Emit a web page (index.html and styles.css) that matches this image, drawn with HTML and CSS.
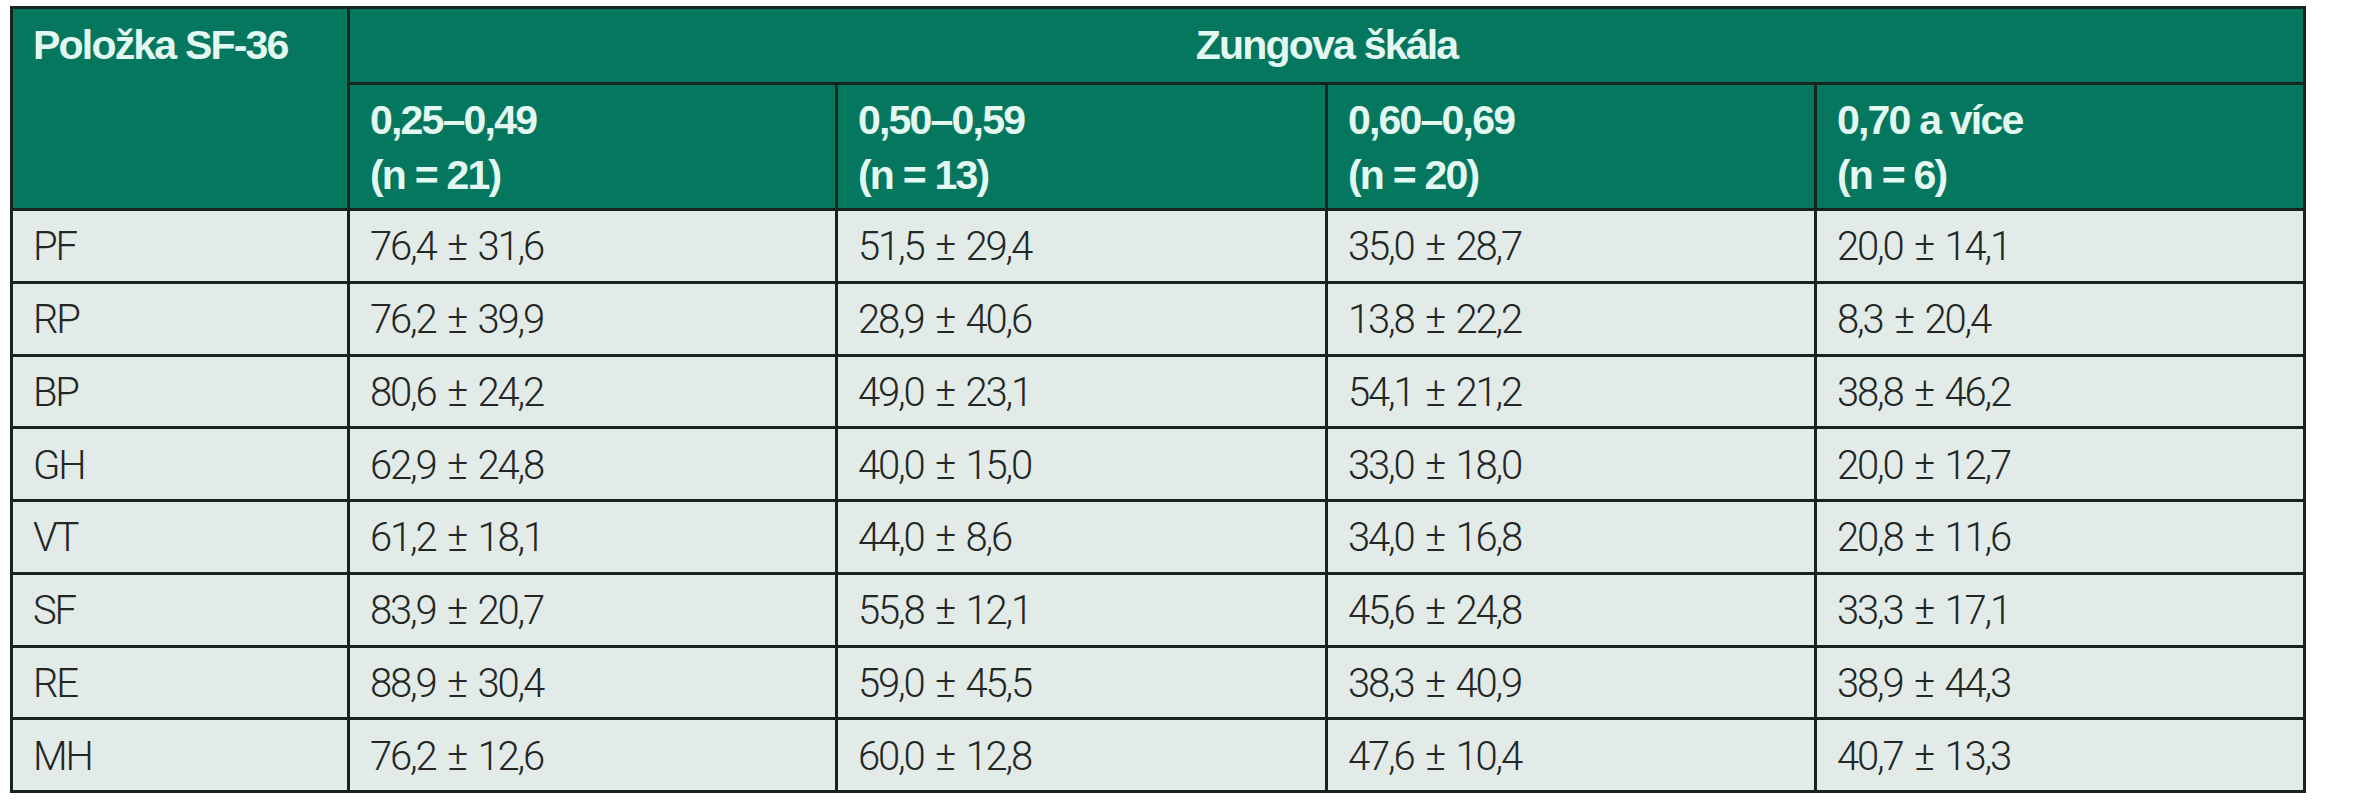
FILE: index.html
```html
<!DOCTYPE html>
<html lang="cs">
<head>
<meta charset="utf-8">
<title>Položka SF-36 – Zungova škála</title>
<link rel="stylesheet" href="styles.css">
</head>
<body>
<div class="page">
<table class="sf-table">
  <colgroup>
    <col class="c-item">
    <col class="c-a">
    <col class="c-b">
    <col class="c-c">
    <col class="c-d">
  </colgroup>
  <thead>
    <tr class="h1">
      <th rowspan="2" class="item-head">Položka SF-36</th>
      <th colspan="4" class="group-head">Zungova škála</th>
    </tr>
    <tr class="h2">
      <th>0,25–0,49<br>(n = 21)</th>
      <th>0,50–0,59<br>(n = 13)</th>
      <th>0,60–0,69<br>(n = 20)</th>
      <th>0,70 a více<br>(n = 6)</th>
    </tr>
  </thead>
  <tbody>
    <tr><td>PF</td><td>76,4 ± 31,6</td><td>51,5 ± 29,4</td><td>35,0 ± 28,7</td><td>20,0 ± 14,1</td></tr>
    <tr><td>RP</td><td>76,2 ± 39,9</td><td>28,9 ± 40,6</td><td>13,8 ± 22,2</td><td>8,3 ± 20,4</td></tr>
    <tr><td>BP</td><td>80,6 ± 24,2</td><td>49,0 ± 23,1</td><td>54,1 ± 21,2</td><td>38,8 ± 46,2</td></tr>
    <tr><td>GH</td><td>62,9 ± 24,8</td><td>40,0 ± 15,0</td><td>33,0 ± 18,0</td><td>20,0 ± 12,7</td></tr>
    <tr><td>VT</td><td>61,2 ± 18,1</td><td>44,0 ± 8,6</td><td>34,0 ± 16,8</td><td>20,8 ± 11,6</td></tr>
    <tr><td>SF</td><td>83,9 ± 20,7</td><td>55,8 ± 12,1</td><td>45,6 ± 24,8</td><td>33,3 ± 17,1</td></tr>
    <tr><td>RE</td><td>88,9 ± 30,4</td><td>59,0 ± 45,5</td><td>38,3 ± 40,9</td><td>38,9 ± 44,3</td></tr>
    <tr><td>MH</td><td>76,2 ± 12,6</td><td>60,0 ± 12,8</td><td>47,6 ± 10,4</td><td>40,7 ± 13,3</td></tr>
  </tbody>
</table>
</div>
</body>
</html>
```

FILE: styles.css
```css
html, body {
  margin: 0;
  padding: 0;
  background: #ffffff;
}

.page {
  padding: 6px 0 0 10px;
}

.sf-table {
  border-collapse: collapse;
  table-layout: fixed;
  width: 2296px;
  border: 3px solid #16241f;
}

.c-item { width: 337px; }
.c-a { width: 488px; }
.c-b { width: 490px; }
.c-c { width: 489px; }
.c-d { width: 489px; }

.sf-table th,
.sf-table td {
  border: 3px solid #16241f;
  text-align: left;
  padding: 0 0 0 20px;
}

.sf-table th {
  background: #05775f;
  color: #e3f8f1;
  font-family: "Liberation Sans", Arial, sans-serif;
  font-weight: 700;
  font-size: 41px;
  letter-spacing: -1.8px;
}

.h1 { height: 73px; }

.item-head {
  vertical-align: top;
  line-height: 73px;
}

.group-head {
  text-align: center !important;
  padding: 0 !important;
  line-height: 73px;
}

.h2 { height: 126px; }

.h2 th {
  line-height: 55px;
  vertical-align: middle;
  padding-top: 3px;
}

.sf-table tbody tr {
  height: 72.75px;
}

.sf-table td {
  background: #e2ebe7;
  color: #222725;
  font-family: "Roboto", "Liberation Sans", Arial, sans-serif;
  font-size: 40px;
  font-weight: 300;
  letter-spacing: -2.2px;
  word-spacing: 4px;
  vertical-align: middle;
  padding-top: 2px;
}
```
